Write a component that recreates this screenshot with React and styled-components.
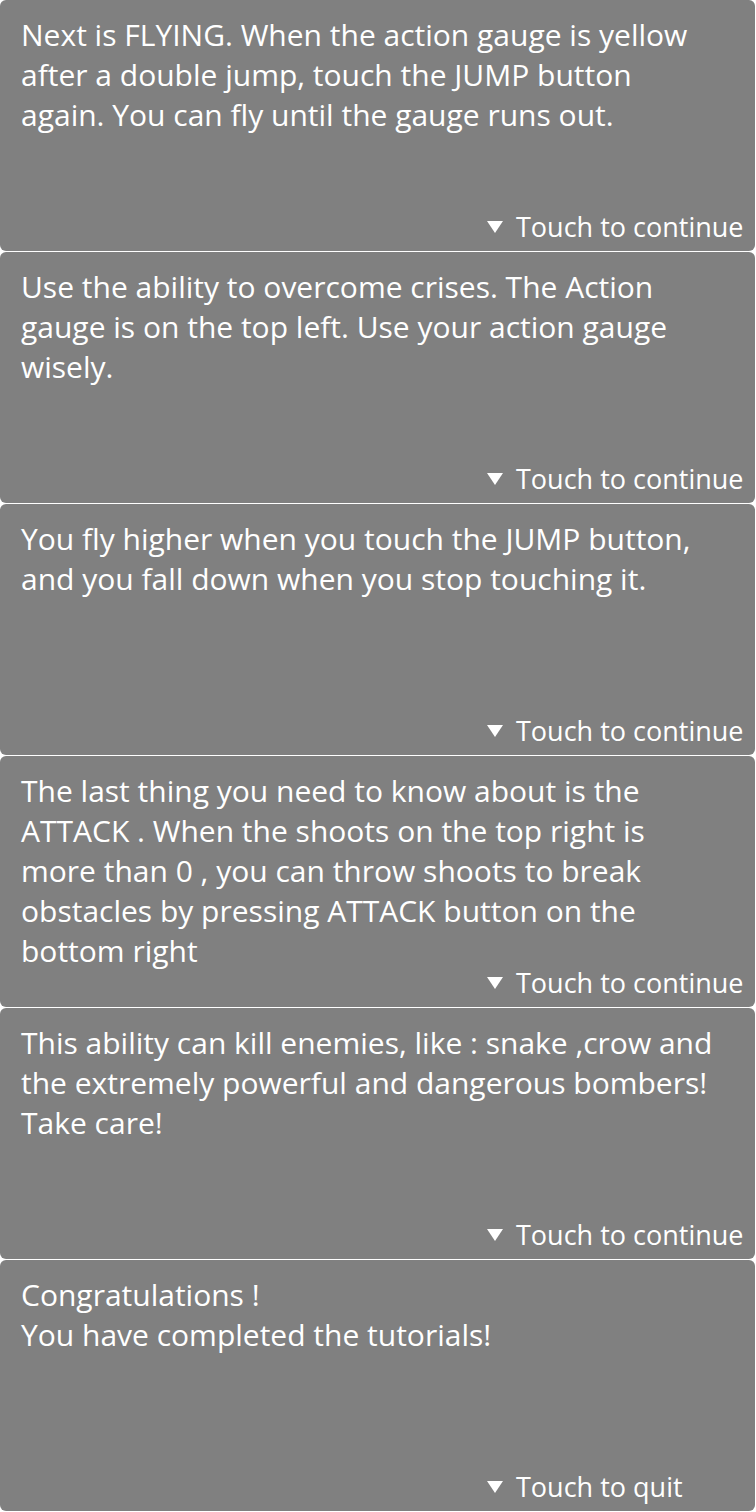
import styled, { createGlobalStyle } from "styled-components";

const GlobalStyle = createGlobalStyle`
  html, body {
    margin: 0;
    padding: 0;
    background: #ffffff;
  }
  body {
    font-family: "Open Sans", "DejaVu Sans", sans-serif;
  }
`;

const messages = [
  {
    text: "Next is FLYING. When the action gauge is yellow after a double jump, touch the JUMP button again. You can fly until the gauge runs out.",
    action: "Touch to continue",
  },
  {
    text: "Use the ability to overcome crises. The Action gauge is on the top left. Use your action gauge wisely.",
    action: "Touch to continue",
  },
  {
    text: "You fly higher when you touch the JUMP button, and you fall down when you stop touching it.",
    action: "Touch to continue",
  },
  {
    text: "The last thing you need to know about is the ATTACK . When the shoots on the top right is more than 0 , you can throw shoots to break obstacles by pressing ATTACK button on the bottom right",
    action: "Touch to continue",
  },
  {
    text: "This ability can kill enemies, like : snake ,crow and the extremely powerful and dangerous bombers! Take care!",
    action: "Touch to continue",
  },
  {
    text: "Congratulations !\nYou have completed the tutorials!",
    action: "Touch to quit",
  },
];

function App() {
  return (
    <>
      <GlobalStyle />
      <Stack>
        {messages.map((m, i) => (
          <Dialog key={i}>
            <Message>{m.text}</Message>
            <Prompt>
              <svg width="16" height="12" viewBox="0 0 16 12">
                <path d="M0 0 L16 0 L8 12 Z" fill="#ffffff" />
              </svg>
              <span>{m.action}</span>
            </Prompt>
          </Dialog>
        ))}
      </Stack>
    </>
  );
}

export default App;

const Stack = styled.div`
  display: flex;
  flex-direction: column;
  gap: 1px;
  width: 756px;
`;

const Dialog = styled.div`
  height: 251px;
  width: 755px;
  box-sizing: border-box;
  background-color: #808080;
  border-radius: 6px;
  padding: 15px 10px 13px 21px;
  display: flex;
  flex-direction: column;
  color: #ffffff;
`;

const Message = styled.div`
  flex: 1 1 0;
  min-height: 0;
  max-width: 696px;
  font-size: 30px;
  line-height: 40px;
  white-space: pre-line;
`;

const Prompt = styled.div`
  display: flex;
  align-items: center;
  margin-left: 466px;
  font-size: 27px;
  line-height: 22px;
  gap: 13px;

  svg {
    flex-shrink: 0;
  }
`;
